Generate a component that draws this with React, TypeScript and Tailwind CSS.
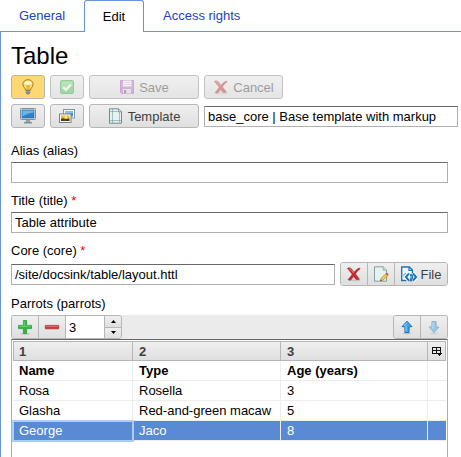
import { useState } from "react";
import type { ReactNode } from "react";
import { clsx } from "clsx";

const Icon = ({ children }: { children: ReactNode }) => (
  <svg width="16" height="16" viewBox="0 0 16 16" className="shrink-0" aria-hidden="true">
    {children}
  </svg>
);

const BulbIcon = () => (
  <Icon>
    <path d="M8 .7C4.900 .7 2.900 2.800 2.900 5.300c0 2.400 2.300 3.700 2.800 6h4.600c.5-2.300 2.800-3.600 2.800-6C13.100 2.800 11.100.7 8 .7z" fill="#fbe06a" stroke="#94702a" strokeWidth=".9" />
    <path d="M4.300 5C4.500 3 6 1.900 8 1.900S11.500 3 11.600 5C9.500 6 6.500 6 4.300 5z" fill="#fff8cf" />
    <path d="M6.500 6.500l1 1.200.7-1.200.8 1.200.8-1.200M7.200 7.500v3.500M9 7.500v3.500" fill="none" stroke="#c88a12" strokeWidth=".7" />
    <path d="M5.700 11.500h4.600v2.300L9.200 15.300H6.800l-1.100-1.500z" fill="#5f6266" />
    <path d="M5.700 12.400h4.600M5.900 13.900h4.200" stroke="#d4d6d8" strokeWidth=".6" />
  </Icon>
);

const CheckIcon = () => (
  <Icon>
    <rect x="1.500" y="1.500" width="13" height="13" rx="1.500" fill="#4cc552" stroke="#3aa043" />
    <path d="M2.500 2.500h11v4l-11 4z" fill="#79d67d" />
    <path d="M4.200 8.200l2.700 2.800 5-5.500" fill="none" stroke="#fff" strokeWidth="2.200" />
  </Icon>
);

const SaveIcon = () => (
  <Icon>
    <path d="M1.500 1.500h13v13h-12l-1-1z" fill="#b66fc4" stroke="#a05bb0" />
    <rect x="4" y="1.500" width="8.500" height="6" fill="#f8f2fa" />
    <path d="M5 3.500h6.500M5 5.500h6.500" stroke="#d2b5d8" strokeWidth=".8" />
    <rect x="4" y="10" width="8" height="4.500" fill="#e5dce8" />
    <rect x="5" y="11" width="2.200" height="3.500" fill="#7a4a86" />
  </Icon>
);

const CrossIcon = () => (
  <Icon>
    <ellipse cx="8" cy="14.300" rx="6.500" ry="1" fill="#000" opacity=".12" />
    <path d="M1.500 2.300C3.500 1.300 5 2.100 6 3.600l2 2.700c1.500-2 3.200-3.500 5.500-4.300l.7.700c-2.100 1.500-3.600 3.200-4.700 5.300l4 5.200c-1.800.9-3.400.6-4.500-1L7.700 10.400c-1 1.500-2 2.900-3.400 3.700-1 .3-1.900-.1-2.100-.8 1.700-1.500 3-3.200 4-5z" fill="#c92c2e" stroke="#9f1d20" strokeWidth=".5" />
    <path d="M3 2.900c1-.2 1.900.4 2.500 1.400l2 2.700" fill="none" stroke="#f08a80" strokeWidth=".9" />
  </Icon>
);

const MonitorIcon = () => (
  <Icon>
    <rect x=".5" y=".5" width="15" height="11" rx=".8" fill="#dfe3e6" stroke="#858d94" />
    <rect x="2" y="2" width="12" height="8" fill="#2e83c8" stroke="#1d65a4" strokeWidth=".6" />
    <path d="M2.400 2.400h11.200v2c-4 .4-8 1.600-11.200 4z" fill="#6bb5e8" />
    <path d="M6 12h4l.6 2.500H5.400z" fill="#9aa1a7" />
    <path d="M4 14.800h8" stroke="#757c82" strokeWidth="1.200" />
  </Icon>
);

const PicturesIcon = () => (
  <Icon>
    <rect x="4.500" y="1.500" width="11" height="8.500" fill="#fff" stroke="#8794a3" />
    <rect x="6" y="3" width="8" height="5.500" fill="#4b91d1" />
    <path d="M6 3h8v2L6 7z" fill="#86bdea" />
    <rect x=".5" y="6" width="11.500" height="8.500" fill="#fff" stroke="#77818b" />
    <rect x="2" y="7.500" width="8.500" height="5.500" fill="#edbb28" />
    <path d="M2 11c2-1.200 3-.4 4.200 0s3-.8 4.300-.6V13H2z" fill="#514016" />
    <circle cx="7" cy="9.200" r="1.200" fill="#fff3a0" />
  </Icon>
);

const TemplateIcon = () => (
  <Icon>
    <path d="M1.500.8h9l3 3v11.400h-12z" fill="#e6f1f1" stroke="#6f8b8d" />
    <path d="M10.500.8v3h3" fill="#cfdcdd" stroke="#6f8b8d" strokeWidth=".8" />
    <path d="M4.500 1.500v13.200M11.500 4.500v10.200M2.500 3.500h8M2.500 12.500h11" stroke="#5d8b91" strokeWidth="1" strokeDasharray="1 1" />
  </Icon>
);

const EditPageIcon = () => (
  <Icon>
    <path d="M1.500.8h8.700l3.300 3.300v11.100h-12z" fill="#e6f1f0" stroke="#7d9496" strokeWidth=".9" />
    <path d="M10.200.8v3.300h3.300" fill="#c8d8da" stroke="#8ba1a3" strokeWidth=".8" />
    <path d="M7.500 14.800l.8-2.700 4.800-4.500 1.900 1.900-4.900 4.500z" fill="#f6d23f" stroke="#8e7530" strokeWidth=".6" />
    <path d="M12.600 8l1-1c1-.5 2.200.8 1.700 1.700l-1 1z" fill="#dd5252" />
    <path d="M7.300 15l.5-1.600 1.100 1.100z" fill="#333" />
  </Icon>
);

const FileCodeIcon = () => (
  <Icon>
    <path d="M11.400 14.500H.7V1h7.700l3 3z" fill="#eef6fb" stroke="#1c74b3" strokeWidth="1.300" />
    <path d="M8 1v3.400h3.400" fill="none" stroke="#1c74b3" strokeWidth="1.200" />
    <path d="M2.300 12V8.500l2.500-2 1.700 2.500-2.500 3z" fill="#78b7df" />
    <path d="M8 7l-3.600 4L8 15M12 7l3.500 4-3.500 4" fill="none" stroke="#fff" strokeWidth="3.400" />
    <path d="M8 7.300L4.900 11 8 14.700M12 7.300l3.100 3.700-3.100 3.700" fill="none" stroke="#1c74b3" strokeWidth="2" />
    <path d="M10 8v2.500M10 11.500V14" stroke="#1c74b3" strokeWidth="1.800" />
  </Icon>
);

const PlusIcon = () => (
  <Icon>
    <ellipse cx="8" cy="14.800" rx="5" ry=".9" fill="#000" opacity=".15" />
    <path d="M6.400 1.500h3.200v4.900h4.900v3.200H9.600v4.900H6.400V9.600H1.500V6.400h4.900z" fill="#2fb83c" stroke="#209330" strokeWidth=".7" />
    <path d="M7.200 2.300v5H2.300M7.200 7.200h6.500" fill="none" stroke="#7fe07f" strokeWidth=".8" />
  </Icon>
);

const MinusIcon = () => (
  <Icon>
    <rect x="1.300" y="6.400" width="13.400" height="3.400" rx=".4" fill="#c93a3c" stroke="#a92528" strokeWidth=".7" />
    <path d="M2 7.300h12" stroke="#e88480" strokeWidth=".8" />
  </Icon>
);

const ArrowIcon = ({ down = false }: { down?: boolean }) => (
  <Icon>
    <ellipse cx="8" cy="14.600" rx="4.500" ry=".8" fill="#000" opacity=".15" />
    <path
      d={down ? "M8 13.500l5-5.500h-2.900V2.500H5.900V8H3z" : "M8 2.200l5 5.500h-2.900v5.800H5.900V7.700H3z"}
      fill="#38a5ee"
      stroke="#1767ad"
      strokeWidth=".9"
      strokeLinejoin="round"
    />
    <path d={down ? "M7 3.500v5.500H5.200" : "M5 7l3-3.400M7 6.500v6"} fill="none" stroke="#9ad8fb" strokeWidth=".9" />
  </Icon>
);

const ColumnsIcon = () => (
  <svg width="10" height="9" viewBox="0 0 10 9" shapeRendering="crispEdges" aria-hidden="true">
    <path d="M0 0h9v1H0zM0 3h9v1H0zM0 1h1v6H0zM4 1h1v6H4zM8 1h1v5H8zM1 6h4v1H1z" fill="#111" />
    <path d="M5 6h5v1H9v1H8v1H7V8H6V7H5z" fill="#111" />
  </svg>
);

const face = "flex items-center justify-center gap-1 bg-linear-to-b from-[#efefef] to-[#dfdfdf] text-[#3f3f3f]";
const field = "h-[21px] min-w-0 border border-[#b0b0b0] border-t-[#686868] bg-white px-[3px] text-black outline-none";
const groupFrame = "flex h-6 shrink-0 divide-x divide-[#b6b6b6] overflow-hidden rounded-[3px] border border-[#b6b6b6]";

type ButtonProps = { icon: ReactNode; text?: string; label?: string; width: string; disabled?: boolean; active?: boolean };

const ToolButton = ({ icon, text, label, width, disabled, active }: ButtonProps) => (
  <button
    type="button"
    aria-label={label}
    disabled={disabled}
    className={clsx(
      "flex h-6 shrink-0 items-center justify-center rounded-[3px] border text-[#3f3f3f]",
      width,
      disabled ? "border-[#c2c2c2] bg-linear-to-b from-[#f0f0f0] to-[#e4e4e4]" : "border-[#b6b6b6]",
      !disabled && (active ? "bg-[#ffd873]" : "bg-linear-to-b from-[#efefef] to-[#dfdfdf]"),
    )}
  >
    <span className={clsx("flex items-center gap-1", disabled && "opacity-45")}>
      {icon}
      {text && <span className="pt-0.5">{text}</span>}
    </span>
  </button>
);

const Label = ({ id, text, required }: { id: string; text: string; required?: boolean }) => (
  <label htmlFor={id} className="block leading-[22px]">
    {text}
    {required && <span className="text-[#f00000]"> *</span>}
  </label>
);

const rows = [
  ["Name", "Type", "Age (years)"],
  ["Rosa", "Rosella", "3"],
  ["Glasha", "Red-and-green macaw", "5"],
  ["George", "Jaco", "8"],
];

const headCell = "h-5 border-y border-r border-[#b6b6b6] bg-linear-to-b from-[#efefef] to-[#dfdfdf] p-0";

export default function App() {
  const [count, setCount] = useState(3);
  const selected = 3;

  return (
    <div className="flex min-h-screen flex-col bg-white font-['Liberation_Sans',Arial,sans-serif] text-[13px] leading-4 text-black">
      <nav className="flex h-8 shrink-0" aria-label="Sections">
        <button type="button" className="w-[84px] border-b border-[#6a92dc] text-[#2440c4]">General</button>
        <button type="button" aria-current="page" className="w-[60px] rounded-t-[3px] border border-b-0 border-[#6a92dc]">Edit</button>
        <button type="button" className="border-b border-[#6a92dc] px-[19px] text-[#2440c4]">Access rights</button>
        <div className="grow border-b border-[#6a92dc]" />
      </nav>

      <main className="flex grow flex-col border-l border-[#6a92dc] pl-2.5">
        <h1 className="mt-2 mb-[3px] text-2xl leading-8">Table</h1>

        <div className="flex flex-col gap-[5px] pr-[3px]">
          <div className="flex gap-[5px]">
            <ToolButton icon={<BulbIcon />} label="Toggle" width="w-[34px]" active />
            <ToolButton icon={<CheckIcon />} label="Approve" width="w-[34px]" disabled />
            <ToolButton icon={<SaveIcon />} text="Save" width="w-[110px]" disabled />
            <ToolButton icon={<CrossIcon />} text="Cancel" width="w-[79px]" disabled />
          </div>
          <div className="flex items-center gap-[5px]">
            <ToolButton icon={<MonitorIcon />} label="Preview" width="w-[34px]" />
            <ToolButton icon={<PicturesIcon />} label="Media" width="w-[34px]" />
            <ToolButton icon={<TemplateIcon />} text="Template" width="w-[110px]" />
            <input className={clsx(field, "grow")} aria-label="Template" defaultValue="base_core | Base template with markup" />
          </div>
        </div>

        <form className="mt-3 flex grow flex-col gap-[7px] pr-[13px]">
          <div>
            <Label id="alias" text="Alias (alias)" />
            <input id="alias" className={clsx(field, "block w-full")} />
          </div>
          <div>
            <Label id="title" text="Title (title)" required />
            <input id="title" className={clsx(field, "block w-full")} defaultValue="Table attribute" />
          </div>
          <div>
            <Label id="core" text="Core (core)" required />
            <div className="flex items-center gap-[5px]">
              <input id="core" className={clsx(field, "grow")} defaultValue="/site/docsink/table/layout.httl" />
              <div className={groupFrame}>
                <button type="button" aria-label="Remove file" className={clsx(face, "w-[27px]")}><CrossIcon /></button>
                <button type="button" aria-label="Edit file" className={clsx(face, "w-[27px]")}><EditPageIcon /></button>
                <button type="button" className={clsx(face, "w-[52px]")}>
                  <FileCodeIcon />
                  <span className="pt-0.5">File</span>
                </button>
              </div>
            </div>
          </div>

          <div className="flex grow flex-col">
            <Label id="count" text="Parrots (parrots)" />
            <div className="flex h-6 shrink-0 justify-between bg-[#ebebeb]">
              <div className={groupFrame}>
                <button type="button" aria-label="Add row" className={clsx(face, "w-[27px]")}><PlusIcon /></button>
                <button type="button" aria-label="Remove row" className={clsx(face, "w-[27px]")}><MinusIcon /></button>
                <input
                  id="count"
                  type="number"
                  value={count}
                  onChange={(e) => setCount(Number(e.target.value))}
                  className="w-[39px] [appearance:textfield] bg-white px-[3px] pt-0.5 outline-none"
                />
                <div className="flex w-4 flex-col divide-y divide-[#b6b6b6]">
                  <button type="button" aria-label="More" onClick={() => setCount(count + 1)} className={clsx(face, "grow")}>
                    <svg width="5" height="3" viewBox="0 0 5 3" aria-hidden="true"><path d="M0 3L2.500 0 5 3z" /></svg>
                  </button>
                  <button type="button" aria-label="Fewer" onClick={() => setCount(count - 1)} className={clsx(face, "grow")}>
                    <svg width="5" height="3" viewBox="0 0 5 3" aria-hidden="true"><path d="M0 0L2.500 3 5 0z" /></svg>
                  </button>
                </div>
              </div>
              <div className={groupFrame}>
                <button type="button" aria-label="Move up" className={clsx(face, "w-[27px]")}><ArrowIcon /></button>
                <button type="button" aria-label="Move down" disabled className={clsx(face, "w-[26px]")}>
                  <span className="opacity-45"><ArrowIcon down /></span>
                </button>
              </div>
            </div>

            <div className="grow border-x border-t border-x-[#b0b0b0] border-t-[#686868] p-px">
              <table className="w-full table-fixed border-separate border-spacing-0 text-left">
                <colgroup>
                  <col className="w-[120px]" />
                  <col className="w-[148px]" />
                  <col />
                  <col className="w-[18px]" />
                </colgroup>
                <thead>
                  <tr>
                    {["1", "2", "3"].map((n, i) => (
                      <th key={n} scope="col" className={clsx(headCell, i === 0 && "border-l")}>
                        <span className={clsx("block pt-0.5 text-[#3f3f3f]", i === 0 ? "pl-[5px]" : "pl-1.5")}>{n}</span>
                      </th>
                    ))}
                    <th scope="col" className={headCell}>
                      <button type="button" aria-label="Choose columns" className="flex h-4 w-full items-center justify-center"><ColumnsIcon /></button>
                    </th>
                  </tr>
                </thead>
                <tbody>
                  {rows.map((row, r) => (
                    <tr key={row[0]} className={clsx(r === 0 && "font-bold", r === selected && "bg-[#5b8ad4] text-white")}>
                      {row.map((cell, c) => (
                        <td
                          key={c}
                          className={clsx(
                            "h-5 border-r border-b border-[#ededed] py-0 pr-0 pl-1.5",
                            r === selected && c === 0 && "outline-2 -outline-offset-1 outline-[#a8d0f5]",
                          )}
                        >
                          {cell}
                        </td>
                      ))}
                      <td className="h-5 border-b border-[#ededed] p-0" />
                    </tr>
                  ))}
                </tbody>
              </table>
            </div>
          </div>
        </form>
      </main>
    </div>
  );
}
